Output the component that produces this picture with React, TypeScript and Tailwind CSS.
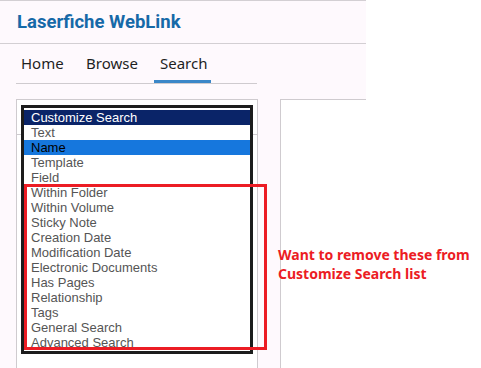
const items = [
  'Text',
  'Name',
  'Template',
  'Field',
  'Within Folder',
  'Within Volume',
  'Sticky Note',
  'Creation Date',
  'Modification Date',
  'Electronic Documents',
  'Has Pages',
  'Relationship',
  'Tags',
  'General Search',
  'Advanced Search',
];

const tabs = [
  { label: 'Home', w: 'w-[52px]' },
  { label: 'Browse', w: 'w-[61px]' },
  { label: 'Search', w: 'w-[57px]', active: true },
];

export default function App() {
  return (
    <div className="relative flex h-[368px] w-[481px] overflow-hidden bg-white">
      <div className="flex w-[366px] flex-col border-t border-[#d3cfd3] bg-[#fef9fd]">
        {/* header */}
        <div className="h-[43px] border-b border-[#d3cfd3] pl-[17px] pt-[8px] leading-[26px]">
          <span className="font-['Roboto'] text-[18.5px] leading-[26px] font-bold text-[#1669a8]">
            Laserfiche WebLink
          </span>
        </div>

        {/* nav tabs */}
        <div className="ml-4 flex h-[40px] w-[241px] gap-[13px] border-b border-[#cfcbcf]">
          {tabs.map((t, i) => (
            <div
              key={t.label}
              className={`${t.w} ${i === 0 ? '-ml-px' : ''} flex border-b-[3px] pl-[6px] pt-[9px] ${
                t.active ? 'border-[#3b87c8]' : 'border-transparent'
              }`}
            >
              <span className="font-['Noto_Sans'] text-[15px] leading-[20px] text-[#1f1f1f]">{t.label}</span>
            </div>
          ))}
        </div>

        {/* panels */}
        <div className="mt-[15px] flex flex-1 pl-4">
          <div className="w-[242px] border-l border-r border-t border-[#cfcbcf] bg-white">
            <div className="h-[35px] border-b border-[#cfcbcf]" />
          </div>
          <div className="ml-[22px] flex-1 border-l border-t border-[#cfcbcf] bg-white" />
        </div>
      </div>

      {/* open listbox */}
      <div className="absolute left-[21px] top-[105px] w-[232px] border-[3px] border-[#1c1c1c] bg-white pt-[2px] pb-[1px] font-['Liberation_Sans'] text-[13px] leading-[15px]">
        <div className="h-[15px] bg-[#0a2468] pl-[7px] text-white">Customize Search</div>
        {items.map((it) => (
          <div
            key={it}
            className={`h-[15px] pl-[7px] ${it === 'Name' ? 'bg-[#1677dd] text-black' : 'text-[#555555]'}`}
          >
            {it}
          </div>
        ))}
      </div>

      {/* annotation */}
      <div className="absolute left-[24px] top-[184px] h-[166px] w-[243px] border-[3px] border-[#ec1c24]" />
      <div className="absolute left-[278px] top-[245px] font-['Noto_Sans'] text-[14px] leading-[19px] font-bold text-[#ec1c24]">
        <div>Want to remove these from</div>
        <div>Customize Search list</div>
      </div>
    </div>
  );
}
